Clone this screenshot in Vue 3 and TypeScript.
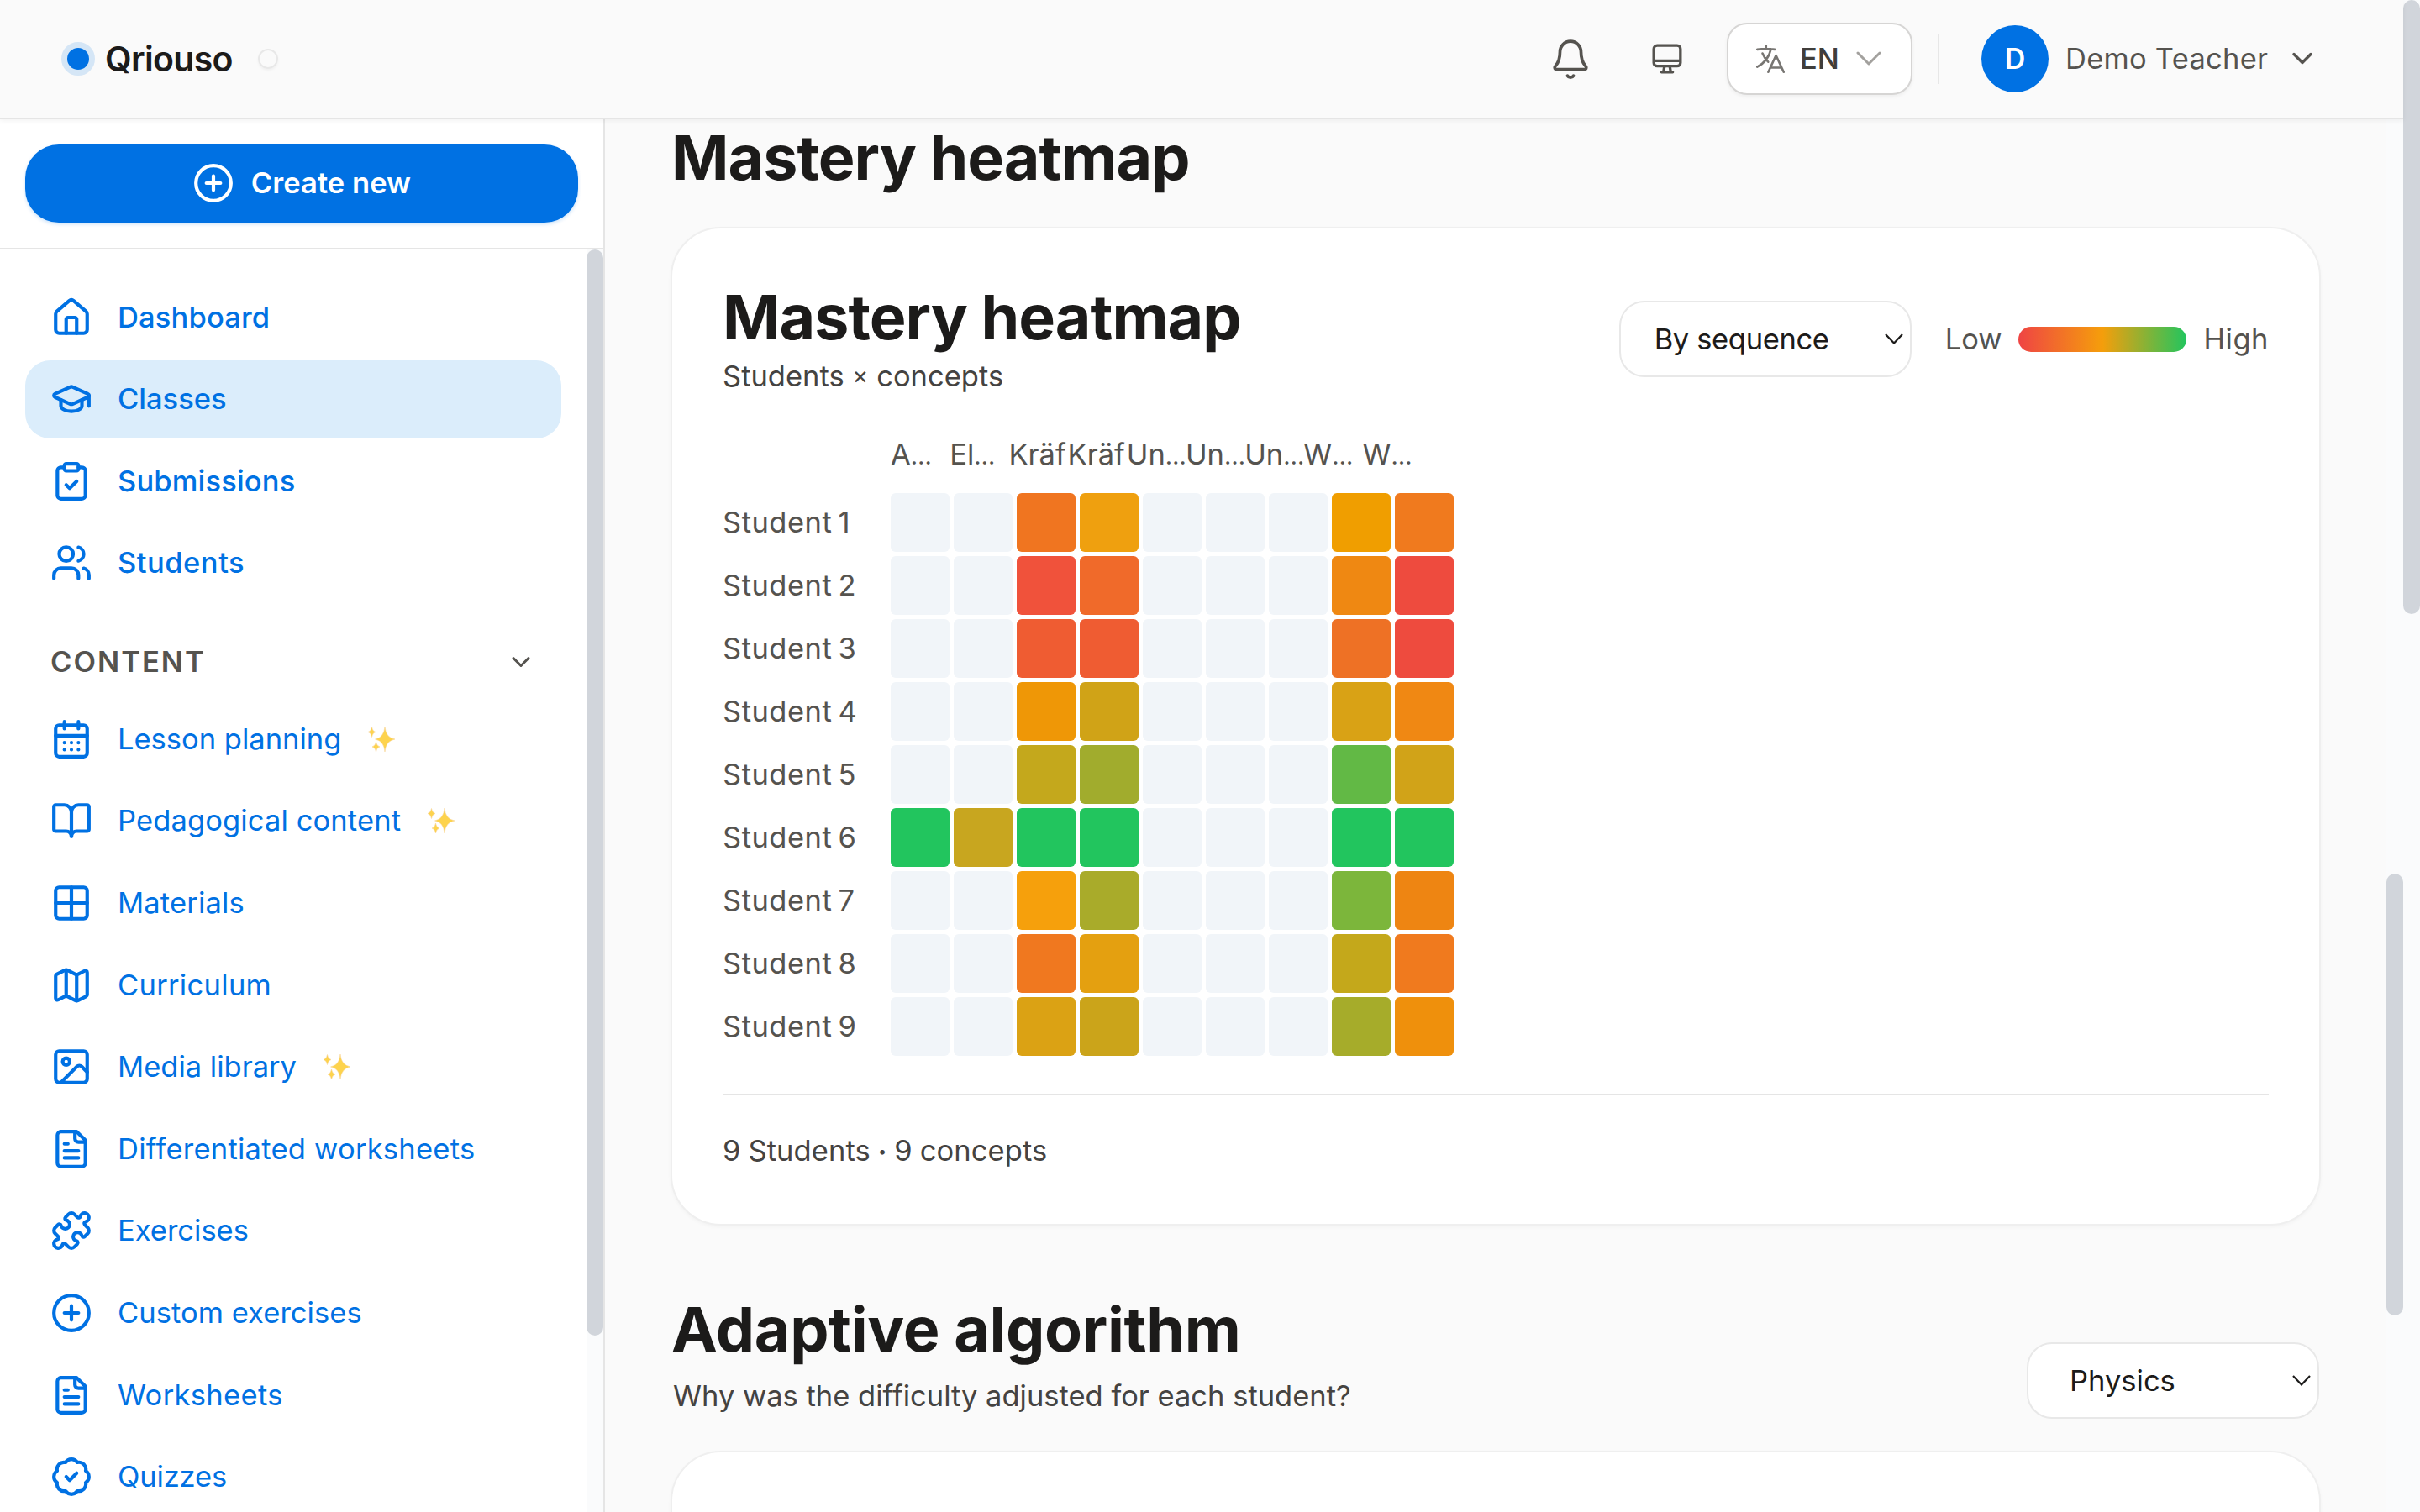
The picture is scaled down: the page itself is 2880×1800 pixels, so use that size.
<script setup lang="ts">
type Shape = { d?: string; c?: [number, number, number]; r?: [number, number, number, number, number] }
type NavItem = { label: string; icon: string; tracking: number; active?: boolean; spark?: boolean }

const icons: Record<string, Shape[]> = {
  home: [
    { d: 'M15 21v-8a1 1 0 0 0-1-1h-4a1 1 0 0 0-1 1v8' },
    { d: 'M3 10a2 2 0 0 1 .709-1.528l7-5.999a2 2 0 0 1 2.582 0l7 5.999A2 2 0 0 1 21 10v9a2 2 0 0 1-2 2H5a2 2 0 0 1-2-2z' },
  ],
  cap: [
    { d: 'M21.42 10.922a1 1 0 0 0-.019-1.838L12.83 5.18a2 2 0 0 0-1.66 0L2.6 9.08a1 1 0 0 0 0 1.832l8.57 3.908a2 2 0 0 0 1.66 0z' },
    { d: 'M22 10v6' },
    { d: 'M6 12.5V16a6 3 0 0 0 12 0v-3.5' },
  ],
  clipboard: [
    { r: [8, 2, 8, 4, 1] },
    { d: 'M16 4h2a2 2 0 0 1 2 2v14a2 2 0 0 1-2 2H6a2 2 0 0 1-2-2V6a2 2 0 0 1 2-2h2' },
    { d: 'm9 14 2 2 4-4' },
  ],
  users: [
    { d: 'M16 21v-2a4 4 0 0 0-4-4H6a4 4 0 0 0-4 4v2' },
    { c: [9, 7, 4] },
    { d: 'M22 21v-2a4 4 0 0 0-3-3.87' },
    { d: 'M16 3.13a4 4 0 0 1 0 7.75' },
  ],
  calendar: [
    { d: 'M8 2v4M16 2v4' },
    { r: [3, 4, 18, 18, 2] },
    { d: 'M3 10h18M8 14h.01M12 14h.01M16 14h.01M8 18h.01M12 18h.01M16 18h.01' },
  ],
  book: [
    { d: 'M12 7v14' },
    { d: 'M3 18a1 1 0 0 1-1-1V4a1 1 0 0 1 1-1h5a4 4 0 0 1 4 4 4 4 0 0 1 4-4h5a1 1 0 0 1 1 1v13a1 1 0 0 1-1 1h-6a3 3 0 0 0-3 3 3 3 0 0 0-3-3z' },
  ],
  grid: [{ r: [3, 3, 18, 18, 2] }, { d: 'M3 12h18M12 3v18' }],
  map: [
    { d: 'M14.106 5.553a2 2 0 0 0 1.788 0l3.659-1.83A1 1 0 0 1 21 4.619v12.764a1 1 0 0 1-.553.894l-4.553 2.277a2 2 0 0 1-1.788 0l-4.212-2.106a2 2 0 0 0-1.788 0l-3.659 1.83A1 1 0 0 1 3 19.381V6.618a1 1 0 0 1 .553-.894l4.553-2.277a2 2 0 0 1 1.788 0z' },
    { d: 'M15 5.764v15M9 3.236v15' },
  ],
  image: [
    { r: [3, 3, 18, 18, 2] },
    { c: [9, 9, 2] },
    { d: 'm21 15-3.086-3.086a2 2 0 0 0-2.828 0L6 21' },
  ],
  file: [
    { d: 'M15 2H6a2 2 0 0 0-2 2v16a2 2 0 0 0 2 2h12a2 2 0 0 0 2-2V7Z' },
    { d: 'M14 2v4a2 2 0 0 0 2 2h4' },
    { d: 'M10 9H8M16 13H8M16 17H8' },
  ],
  puzzle: [
    { d: 'M15.39 4.39a1 1 0 0 0 1.68-.474 2.5 2.5 0 1 1 3.014 3.015 1 1 0 0 0-.474 1.68l1.683 1.682a2.414 2.414 0 0 1 0 3.414L19.61 15.39a1 1 0 0 1-1.68-.474 2.5 2.5 0 1 0-3.014 3.015 1 1 0 0 1 .474 1.68l-1.683 1.682a2.414 2.414 0 0 1-3.414 0L8.61 19.61a1 1 0 0 0-1.68.474 2.5 2.5 0 1 1-3.014-3.015 1 1 0 0 0 .474-1.68l-1.683-1.682a2.414 2.414 0 0 1 0-3.414L4.39 8.61a1 1 0 0 1 1.68.474 2.5 2.5 0 1 0 3.014-3.015 1 1 0 0 1-.474-1.68l1.683-1.682a2.414 2.414 0 0 1 3.414 0z' },
  ],
  plus: [{ c: [12, 12, 10] }, { d: 'M8 12h8M12 8v8' }],
  badge: [
    { d: 'M3.85 8.62a4 4 0 0 1 4.78-4.77 4 4 0 0 1 6.74 0 4 4 0 0 1 4.78 4.78 4 4 0 0 1 0 6.74 4 4 0 0 1-4.77 4.78 4 4 0 0 1-6.75 0 4 4 0 0 1-4.78-4.77 4 4 0 0 1 0-6.76Z' },
    { d: 'm9 12 2 2 4-4' },
  ],
}

const primary: NavItem[] = [
  { label: 'Dashboard', icon: 'home', tracking: 0.15 },
  { label: 'Classes', icon: 'cap', tracking: 0, active: true },
  { label: 'Submissions', icon: 'clipboard', tracking: 0.15 },
  { label: 'Students', icon: 'users', tracking: 0.5 },
]

const content: NavItem[] = [
  { label: 'Lesson planning', icon: 'calendar', tracking: 0, spark: true },
  { label: 'Pedagogical content', icon: 'book', tracking: 0.12, spark: true },
  { label: 'Materials', icon: 'grid', tracking: 0.15 },
  { label: 'Curriculum', icon: 'map', tracking: 0.3 },
  { label: 'Media library', icon: 'image', tracking: 0, spark: true },
  { label: 'Differentiated worksheets', icon: 'file', tracking: 0.25 },
  { label: 'Exercises', icon: 'puzzle', tracking: 0 },
  { label: 'Custom exercises', icon: 'plus', tracking: 0.05 },
  { label: 'Worksheets', icon: 'file', tracking: 0.35 },
  { label: 'Quizzes', icon: 'badge', tracking: -0.15 },
]

const concepts = [
  { name: 'A', cut: true },
  { name: 'El', cut: true },
  { name: 'Kräf', cut: false },
  { name: 'Kräf', cut: false },
  { name: 'Un', cut: true },
  { name: 'Un', cut: true },
  { name: 'Un', cut: true },
  { name: 'W', cut: true },
  { name: 'W', cut: true },
]

const none = '#f1f5f9'
const top = '#22c55e'
const scores: string[][] = [
  [none, none, '#f07520', '#efa00f', none, none, none, '#f09e00', '#f07a1e'],
  [none, none, '#f0523b', '#f06a2a', none, none, none, '#ef8812', '#ee4b3e'],
  [none, none, '#ef5c32', '#ef5c32', none, none, none, '#ee7125', '#ee4b3e'],
  [none, none, '#ef9706', '#d0a317', none, none, none, '#d9a215', '#f08813'],
  [none, none, '#c4a81c', '#a1ac2d', none, none, none, '#62b945', '#d1a318'],
  [top, '#c8a61f', top, top, none, none, none, top, top],
  [none, none, '#f6a00c', '#a9ab2a', none, none, none, '#7cb63b', '#ee8512'],
  [none, none, '#f0781f', '#e4a010', none, none, none, '#c4a81b', '#f07a1e'],
  [none, none, '#dba214', '#cba41a', none, none, none, '#a6ac2a', '#ef900c'],
]
</script>

<template>
  <div class="app">
    <div class="shell">
      <header class="topbar">
        <div class="brand">
          <span class="brand-dot"></span>
          <span class="brand-name">Qriouso</span>
          <span class="brand-ring"></span>
        </div>
        <div class="tools">
          <svg class="bell" viewBox="0 0 24 24" fill="none" stroke="currentColor" stroke-width="1.8" stroke-linecap="round" stroke-linejoin="round">
            <path d="M12 2a6 6 0 0 0-6 6c0 5.5-1.8 7.2-2.8 8.4-.5.7-.1 1.6.8 1.6h16c.9 0 1.3-.9.8-1.6C19.8 15.2 18 13.500 18 8a6 6 0 0 0-6-6Z" />
            <path d="M10.3 21.7a2 2 0 0 0 3.4 0" />
          </svg>
          <svg class="screen" viewBox="0 0 24 24" fill="none" stroke="currentColor" stroke-width="2.1" stroke-linejoin="round" stroke-linecap="round">
            <rect x="2" y="2" width="20" height="15.5" rx="2.5" />
            <path d="M2.500 13.500h19M10 17.500l-.7 4.300M14 17.500l.7 4.300M7.800 22h8.400" />
          </svg>
          <div class="lang">
            <svg class="lang-icon" viewBox="0 0 24 24" fill="none" stroke="currentColor" stroke-width="1.5" stroke-linecap="round" stroke-linejoin="round">
              <path d="m10.500 21 5.250-11.250L21 21m-9-3h7.500M3 5.621a48.474 48.474 0 0 1 6-.371m0 0c1.120 0 2.233.038 3.334.114M9 5.250V3m3.334 2.364C11.176 10.658 7.690 15.080 3 17.502m9.334-12.138c.896.061 1.785.147 2.666.257m-4.589 8.495a18.023 18.023 0 0 1-3.827-5.802" />
            </svg>
            <span class="lang-code">EN</span>
            <svg class="lang-chev" viewBox="0 0 30 18" fill="none" stroke="currentColor" stroke-width="3" stroke-linecap="round" stroke-linejoin="round"><path d="M2 2l13 13L28 2" /></svg>
          </div>
          <span class="rule"></span>
          <span class="avatar">D</span>
          <span class="user">Demo Teacher</span>
          <svg class="user-chev" viewBox="0 0 26 16" fill="none" stroke="currentColor" stroke-width="3.4" stroke-linecap="round" stroke-linejoin="round"><path d="M3 2.500l10 10 10-10" /></svg>
        </div>
      </header>

      <div class="body">
        <aside class="sidebar">
          <div class="create-wrap">
            <button class="create">
              <svg class="icon" viewBox="0 0 24 24"><circle cx="12" cy="12" r="10" /><path d="M8 12h8M12 8v8" /></svg>
              <span>Create new</span>
            </button>
          </div>
          <div class="nav-scroll">
            <nav class="nav">
              <a v-for="item in primary" :key="item.label" class="item strong" :class="{ active: item.active }">
                <svg class="icon" viewBox="0 0 24 24">
                  <template v-for="(s, i) in icons[item.icon]" :key="i">
                    <path v-if="s.d" :d="s.d" />
                    <circle v-else-if="s.c" :cx="s.c[0]" :cy="s.c[1]" :r="s.c[2]" />
                    <rect v-else-if="s.r" :x="s.r[0]" :y="s.r[1]" :width="s.r[2]" :height="s.r[3]" :rx="s.r[4]" />
                  </template>
                </svg>
                <span :style="{ letterSpacing: item.tracking + 'px' }">{{ item.label }}</span>
              </a>
              <div class="group">
                <span>CONTENT</span>
                <svg viewBox="0 0 24 14" fill="none" stroke="currentColor" stroke-width="3" stroke-linecap="round" stroke-linejoin="round"><path d="M3 2.500l9 9 9-9" /></svg>
              </div>
              <a v-for="item in content" :key="item.label" class="item">
                <svg class="icon" viewBox="0 0 24 24">
                  <template v-for="(s, i) in icons[item.icon]" :key="i">
                    <path v-if="s.d" :d="s.d" />
                    <circle v-else-if="s.c" :cx="s.c[0]" :cy="s.c[1]" :r="s.c[2]" />
                    <rect v-else-if="s.r" :x="s.r[0]" :y="s.r[1]" :width="s.r[2]" :height="s.r[3]" :rx="s.r[4]" />
                  </template>
                </svg>
                <span :style="{ letterSpacing: item.tracking + 'px' }">{{ item.label }}</span>
                <svg v-if="item.spark" class="spark" viewBox="0 0 32 30">
                  <path d="M20 0Q21 13 32 15Q21 17 20 30Q19 17 8.500 15Q19 13 20 0Z" />
                  <path d="M4.500 .5Q5.200 5.500 9 6.500Q5.200 7.500 4.500 12.500Q3.800 7.500 0 6.500Q3.800 5.500 4.500 .5Z" />
                  <path d="M9.500 18Q10.200 23 14 24Q10.200 25 9.500 30Q8.800 25 5 24Q8.800 23 9.500 18Z" />
                </svg>
              </a>
            </nav>
            <div class="bar nav-bar"><i></i></div>
          </div>
        </aside>

        <main class="main">
          <h2 class="heading">Mastery heatmap</h2>
          <section class="card heat">
            <div class="card-head">
              <div class="card-title">
                <h3>Mastery heatmap</h3>
                <p>Students <span class="times">×</span> concepts</p>
              </div>
              <div class="controls">
                <div class="select seq">
                  <span>By sequence</span>
                  <svg viewBox="0 0 22 13" fill="none" stroke="currentColor" stroke-width="2.2"><path d="M1 1l10 10.500L21 1" /></svg>
                </div>
                <span class="scale-label">Low</span>
                <span class="scale"></span>
                <span class="scale-label high">High</span>
              </div>
            </div>
            <div class="concepts">
              <span v-for="(c, i) in concepts" :key="i" class="concept">{{ c.name }}<span v-if="c.cut" class="cut">…</span></span>
            </div>
            <div class="rows">
              <div v-for="(row, r) in scores" :key="r" class="row">
                <span class="who">Student {{ r + 1 }}</span>
                <i v-for="(color, c) in row" :key="c" class="cell" :style="{ background: color }"></i>
              </div>
            </div>
            <p class="summary">9 Students <span class="bullet">•</span> 9 concepts</p>
          </section>

          <div class="section-head">
            <div>
              <h2 class="heading adaptive">Adaptive algorithm</h2>
              <p class="lead">Why was the difficulty adjusted for each student?</p>
            </div>
            <div class="select physics">
              <span>Physics</span>
              <svg viewBox="0 0 22 13" fill="none" stroke="currentColor" stroke-width="2.2"><path d="M1 1l10 10.500L21 1" /></svg>
            </div>
          </div>
          <section class="card next"></section>
        </main>
        <div class="bar main-bar"><i></i></div>
      </div>
    </div>
    <div class="bar page-bar"><i></i></div>
  </div>
</template>

<style>
html, body { margin: 0; background: #fafafa; }
</style>

<style scoped>
* { box-sizing: border-box; }
.app {
  display: flex; width: 2880px; height: 1800px; overflow: hidden; background: #fafafa;
  font-family: Inter, "Liberation Sans", sans-serif; font-size: 34.5px; line-height: 50px; color: #1c1b1a;
}
h2, h3, p { margin: 0; }
i { display: block; }
.shell { display: flex; flex-direction: column; width: 2860px; height: 1800px; }

.topbar {
  display: flex; justify-content: space-between; flex: none; height: 142px; padding: 0 107px 0 73px;
  border-bottom: 2px solid #e5e5e5; background: #fafafa; box-shadow: 0 2px 6px rgba(0, 0, 0, .05); position: relative; z-index: 2;
}
.brand, .tools { display: flex; align-items: center; }
.brand-dot { width: 40px; height: 40px; border-radius: 50%; border: 7.5px solid #d5e6f6; background: #0071e3; }
.brand-name { margin-left: 12px; width: 152px; font-size: 41px; font-weight: 600; letter-spacing: -.7px; white-space: nowrap; }
.brand-ring { margin-left: 30px; width: 24px; height: 24px; border-radius: 50%; border: 2px solid #e8e8e8; box-shadow: 0 2px 3px rgba(0, 0, 0, .04); }
.tools { color: #55534f; white-space: nowrap; }
.bell { width: 50px; height: 50px; margin-right: 71px; }
.screen { width: 38px; height: 38px; margin-right: 52px; }
.lang {
  display: flex; align-items: center; width: 221px; height: 86px; padding-left: 29px; border: 2px solid #d6d5d4;
  border-radius: 24px; background: #fff; box-shadow: 0 2px 4px rgba(0, 0, 0, .05);
}
.lang-icon { width: 42px; height: 42px; color: #777572; }
.lang-code { margin-left: 14px; width: 50px; font-weight: 500; color: #403e3b; }
.lang-chev { margin-left: 17px; width: 30px; height: 18px; color: #a3a19e; }
.rule { margin: 0 50px 0 30px; width: 2px; height: 60px; background: #e7e7e7; }
.avatar {
  width: 80px; height: 80px; border-radius: 50%; background: #0071e3; color: #fff; font-size: 34px; font-weight: 600;
  line-height: 80px; text-align: center;
}
.user { margin-left: 20px; width: 242px; letter-spacing: .25px; }
.user-chev { margin-left: 27px; width: 26px; height: 16px; }

.body { display: flex; flex: 1; min-height: 0; }
.sidebar { display: flex; flex-direction: column; flex: none; width: 720px; border-right: 2px solid #e5e5e5; background: #fff; }
.create-wrap { flex: none; height: 155px; padding: 30px; border-bottom: 2px solid #e5e5e5; }
.create {
  display: flex; align-items: center; justify-content: center; gap: 20px; width: 658px; height: 93px; padding: 0 0 1px; border: 0;
  border-radius: 40px; background: #0071e3; color: #fff; font: inherit; font-weight: 600; letter-spacing: .05px;
  box-shadow: 0 2px 4px rgba(0, 113, 227, .2);
}
.icon { flex: none; width: 50px; height: 50px; fill: none; stroke: currentColor; stroke-width: 2; stroke-linecap: round; stroke-linejoin: round; }
.nav-scroll { display: flex; flex: 1; min-height: 0; overflow: hidden; }
.nav { width: 698px; padding: 34px 30px 0; }
.item {
  display: flex; align-items: center; height: 93px; margin-bottom: 4.6px; padding-left: 30px; border-radius: 30px;
  color: #0071e3; white-space: nowrap;
}
.item span { margin-left: 30px; }
.strong { font-weight: 500; }
.item.active { background: #dbedfb; }
.spark { margin-left: 32px; width: 32px; height: 30px; fill: #fdd34d; stroke: #f6cf8a; stroke-width: .5; }
.group {
  display: flex; align-items: center; justify-content: space-between; height: 50px; margin: 46px 36px 20.500px 30px;
  font-weight: 600; color: #55534f; letter-spacing: 2px;
}
.group svg { width: 24px; height: 14px; }

.bar { flex: none; width: 20px; background: #fafbfc; }
.bar i { width: 20px; border-radius: 10px; background: #d1d5db; }
.nav-bar i { height: 1293px; }
.main-bar { padding-top: 898px; }
.main-bar i { height: 526px; }
.page-bar i { height: 731px; }

.main { width: 2120px; height: 1658px; padding: 6px 78px 0; overflow: hidden; }
.heading, .card-title h3 { font-size: 73.5px; line-height: 80px; font-weight: 700; letter-spacing: -.95px; white-space: nowrap; }
.heading { margin-left: 1px; }
.card { border: 2px solid #efefef; border-radius: 60px; background: #fff; box-shadow: 0 2px 4px rgba(0, 0, 0, .03); }
.heat { height: 1189px; margin-top: 42px; padding: 60px; }
.card-head { display: flex; justify-content: space-between; height: 141px; }
.card-title h3 { padding-top: 6px; }
.card-title p { margin-top: 4.5px; color: #454341; }
.times { font-size: 29px; line-height: 30px; vertical-align: 3px; }
.controls { display: flex; align-items: center; height: 91px; margin-top: 26px; color: #55534f; }
.select {
  display: flex; align-items: center; justify-content: space-between; width: 348px; height: 91px; border: 2px solid #e8e8e8;
  border-radius: 30px; background: #fff; color: #1c1b1a;
}
.select svg { width: 22px; height: 13px; }
.seq { margin-right: 40px; padding: 0 8px 0 40px; letter-spacing: -.35px; }
.scale { margin: 0 20px; width: 200px; height: 30px; border-radius: 15px; background: linear-gradient(90deg, #ef4444, #f59e0b, #22c55e); }
.high { letter-spacing: .5px; }
.concepts { display: flex; height: 50px; margin: 43px 0 21px 200px; color: #55534f; }
.concept { flex: none; width: 70.2px; white-space: nowrap; }
.cut { font-size: 29px; letter-spacing: -1px; line-height: 30px; }
.rows { display: flex; flex-direction: column; gap: 5px; }
.row { display: flex; align-items: center; gap: 5px; height: 70px; }
.who { width: 195px; color: #55534f; letter-spacing: .5px; word-spacing: -3px; white-space: nowrap; }
.cell { width: 70px; height: 70px; border-radius: 6px; }
.summary { margin-top: 45px; padding-top: 40.5px; border-top: 2px solid #e5e5e5; color: #454341; letter-spacing: .1px; word-spacing: -.8px; }
.bullet { font-size: 18px; line-height: 20px; vertical-align: 5px; }
.section-head { display: flex; justify-content: space-between; height: 268px; padding-top: 84px; }
.adaptive { letter-spacing: -.35px; }
.lead { margin: 14px 0 0 3px; color: #454341; white-space: nowrap; }
.physics { margin: 55px 2px 0 0; padding: 0 8px 0 49px; }
.next { height: 200px; }
</style>
